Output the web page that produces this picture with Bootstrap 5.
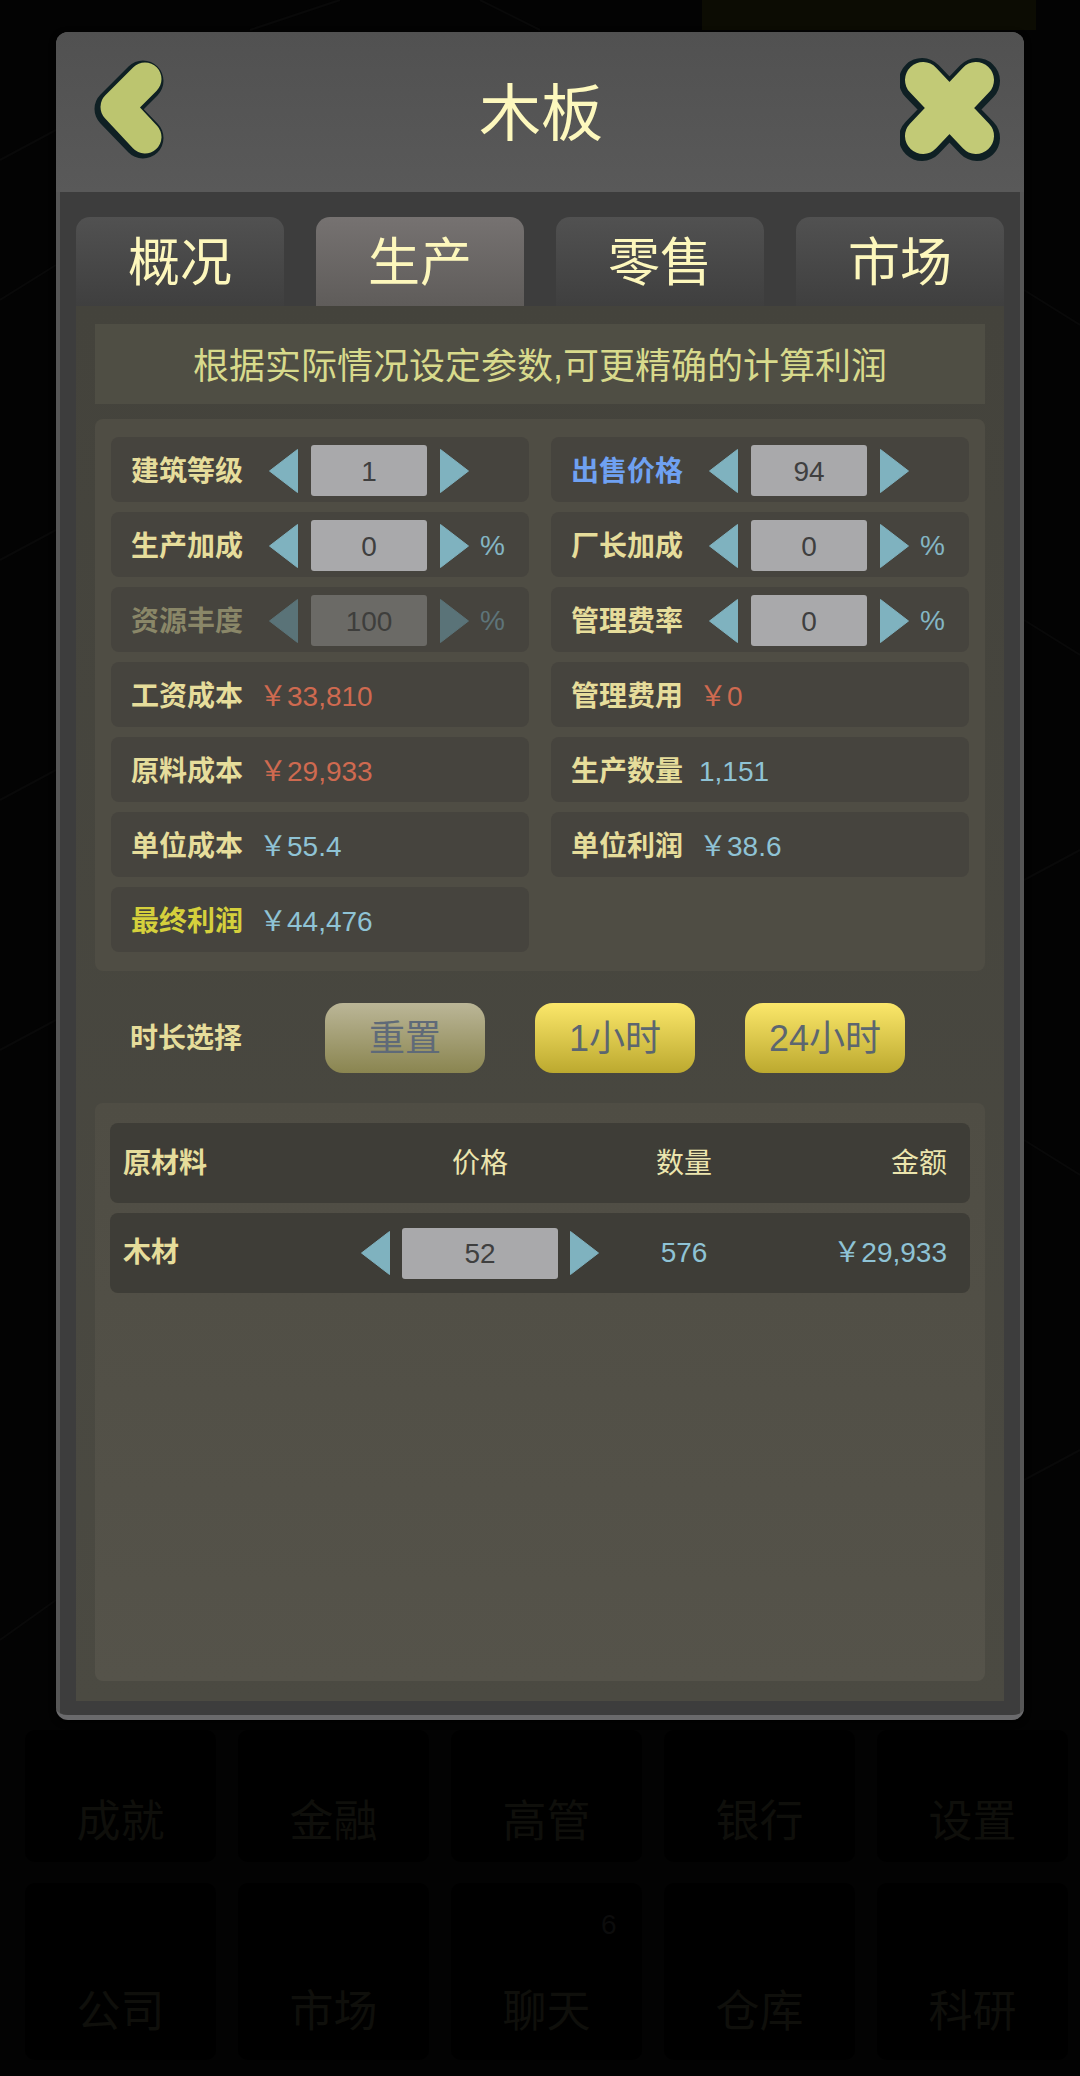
<!DOCTYPE html>
<html lang="zh">
<head>
    <meta charset="utf-8">
    <title>木板</title>
    <link href="https://cdn.jsdelivr.net/npm/bootstrap@5.3.0/dist/css/bootstrap.min.css" rel="stylesheet">
    <style>
        html, body { height: 2076px; overflow: hidden; }
        body { background: #030303; font-family: "Liberation Sans", "Noto Sans CJK SC", sans-serif; position: relative; }
        .backdrop { position: absolute; left: 0; top: 0; width: 1080px; height: 2076px; }
        .game-page { position: relative; padding-top: 32px; }

        .dialog { width: 968px; height: 1688px; margin-left: 56px; background: #565656; border-radius: 12px; border-bottom: 5px solid #6a6a6c; box-shadow: 0 2px 6px #000; overflow: hidden; }
        .dialog-head { height: 160px; padding: 0 24px 0 38px; background: linear-gradient(#515151, #595959); color: #fdf8bd; }
        .head-icon { width: 88px; margin-bottom: 6px; }
        .head-icon.end { width: 100px; }
        .dialog-title { font-size: 62px; line-height: 1; padding-top: 6px; }
        .dialog-body { height: 1523px; margin: 0 4px; padding: 25px 16px 14px; background: #3d3d3d; }

        .tab-list { gap: 32px; height: 89px; }
        .tab-list .nav-link { width: 208px; height: 89px; padding: 2px 0 0; display: flex; align-items: center; justify-content: center; border-radius: 14px 14px 0 0; background: linear-gradient(#515151, #3f3f3f); color: #fdf7bc; font-size: 52px; }
        .tab-list .nav-link.active { background: linear-gradient(#767271, #5f5c5a); }

        .tab-panel { height: 1395px; padding: 18px 19px 20px; background: linear-gradient(#44433c, #4b4a42); }
        .notice-bar { height: 80px; padding-top: 5px; background: #4f4e44; color: #d8da8c; font-size: 36px; }
        .stat-panel { margin-top: 15px; padding: 18px 16px 19px 16px; background: #4f4d44; border-radius: 8px; display: grid; grid-template-columns: 418px 418px; column-gap: 22px; row-gap: 10px; }
        .stat-row { height: 65px; padding-left: 20px; background: #46443e; border-radius: 8px; font-size: 28px; }
        .stat-name { width: 112px; padding-top: 4px; font-weight: 700; color: #e6dd9b; white-space: nowrap; line-height: 1; }
        .stat-name.sell { color: #6fa1f2; }
        .stat-name.profit { color: #d5d03c; }
        .stat-value { margin-left: 16px; padding-top: 4px; color: #8fc3d5; white-space: nowrap; }
        .stat-value.cost { color: #cf6a50; }
        .unit { margin-left: 10px; padding-top: 3px; color: #84b6c4; }

        .stepper { margin: 2px 0 0 25px; gap: 12px; }
        .step-btn { width: 31px; height: 46px; flex: none; fill: #7fb2bf; stroke: #7fb2bf; stroke-width: 1; stroke-linejoin: round; }
        .step-value { width: 116px; height: 51px; padding-top: 2px; background: #a9a9ab; border-radius: 3px; color: #3f3f3f; }
        .stat-row.off .stat-name { color: #8a8768; }
        .stat-row.off .step-btn { fill: #5a7378; stroke: #5a7378; }
        .stat-row.off .step-value { background: #6b6a66; color: #3e3e3c; }
        .stat-row.off .unit { color: #5e7479; }

        .time-row { height: 132px; padding: 32px 0 30px 35px; }
        .time-name { width: 195px; padding-top: 2px; font-size: 28px; font-weight: 700; color: #e6dd9b; line-height: 1; }
        .time-btns { gap: 50px; }
        .time-btn { width: 160px; height: 70px; padding: 2px 0 0; border: 0; border-radius: 18px; background: linear-gradient(#fbe76a, #bca92f); color: #5c6670; font-size: 36px; line-height: 1; }
        .time-btn.reset { background: linear-gradient(#bbb697, #8a8550); color: #5f6a78; }

        .material-panel { height: 578px; padding: 20px 15px; background: linear-gradient(#4f4d44, #55534a); border-radius: 8px; }
        .material-row { height: 80px; margin-bottom: 10px; padding: 0 23px 0 13px; background: #3e3d37; border-radius: 8px; display: grid; grid-template-columns: 237px 240px 168px 1fr; align-items: center; font-size: 28px; color: #ece5ae; }
        .material-row:first-child { padding-top: 2px; }
        .material-row b { color: #e6dd9b; }
        .material-row .stepper { margin: 0; gap: 11px; }
        .material-row .step-value { width: 157px; }
        .material-row .num { color: #8fc3d5; }

        .dim-menu { padding: 10px 25px 0; display: grid; grid-template-columns: repeat(5, 191px); column-gap: 22px; }
        .dim-item { position: relative; display: flex; align-items: flex-end; justify-content: center; background: #000; border-radius: 10px; color: #0f0f0b; font-size: 44px; line-height: 1; }
        .dim-item.top { height: 132px; padding-bottom: 18px; margin-bottom: 21px; }
        .dim-item.low { height: 177px; padding-bottom: 26px; }
        .dim-count { position: absolute; left: 150px; top: 28px; font-size: 28px; color: #0c0c0c; }
    </style>
</head>
<body>
<svg class="backdrop" viewBox="0 0 1080 2076">
    <rect x="702" y="0" width="334" height="30" fill="#0c0c03"/>
    <g stroke="#090909" stroke-width="2" fill="none">
        <path d="M0 160 L56 130 M0 300 L56 265 M0 560 L56 530 M0 800 L56 770 M0 1050 L56 1020 M0 1640 L56 1600"/>
        <path d="M1024 290 L1080 325 M1024 620 L1080 655 M1024 880 L1080 850 M1024 1140 L1080 1175 M1024 1480 L1080 1450"/>
        <path d="M250 30 L340 0 M480 0 L540 30"/>
    </g>
</svg>

<svg width="0" height="0" class="position-absolute">
    <symbol id="tri-left" viewBox="0 0 31 46"><polygon points="1.5,23 29.5,1.5 29.5,44.5"/></symbol>
    <symbol id="tri-right" viewBox="0 0 31 46"><polygon points="1.5,1.5 29.5,23 1.5,44.5"/></symbol>
</svg>

<div class="game-page">
    <div class="dialog">
        <div class="dialog-head d-flex align-items-center">
            <div class="head-icon">
                <svg class="d-block" width="72" height="102" viewBox="94 58 72 102">
                    <polyline points="144,79 116,107 144,136" transform="translate(-1 2)" fill="none" stroke="#0f2024" stroke-width="41" stroke-linecap="round" stroke-linejoin="round"/>
                    <polyline points="145,79 117,107 145,137" fill="none" stroke="#bcc56f" stroke-width="33" stroke-linecap="round" stroke-linejoin="round"/>
                </svg>
            </div>
            <div class="dialog-title flex-grow-1 text-center">木板</div>
            <div class="head-icon end">
                <svg class="d-block" width="100" height="104" viewBox="899 57 100 104">
                    <path d="M921 80 L976 137 M976 80 L921 137" transform="translate(0 1)" fill="none" stroke="#0f2024" stroke-width="46" stroke-linecap="round"/>
                    <path d="M922 80 L975 136 M975 80 L922 136" fill="none" stroke="#c2ca76" stroke-width="36" stroke-linecap="round"/>
                </svg>
            </div>
        </div>

        <div class="dialog-body">
            <ul class="nav tab-list">
                <li class="nav-item"><a class="nav-link" href="#">概况</a></li>
                <li class="nav-item"><a class="nav-link active" href="#">生产</a></li>
                <li class="nav-item"><a class="nav-link" href="#">零售</a></li>
                <li class="nav-item"><a class="nav-link" href="#">市场</a></li>
            </ul>

            <div class="tab-panel">
                <div class="notice-bar d-flex align-items-center justify-content-center">根据实际情况设定参数,可更精确的计算利润</div>

                <div class="stat-panel">
                    <div class="stat-row d-flex align-items-center">
                        <div class="stat-name">建筑等级</div>
                        <div class="stepper d-flex align-items-center">
                            <svg class="step-btn"><use href="#tri-left"/></svg>
                            <div class="step-value d-flex align-items-center justify-content-center">1</div>
                            <svg class="step-btn"><use href="#tri-right"/></svg>
                        </div>
                    </div>
                    <div class="stat-row d-flex align-items-center">
                        <div class="stat-name sell">出售价格</div>
                        <div class="stepper d-flex align-items-center">
                            <svg class="step-btn"><use href="#tri-left"/></svg>
                            <div class="step-value d-flex align-items-center justify-content-center">94</div>
                            <svg class="step-btn"><use href="#tri-right"/></svg>
                        </div>
                    </div>
                    <div class="stat-row d-flex align-items-center">
                        <div class="stat-name">生产加成</div>
                        <div class="stepper d-flex align-items-center">
                            <svg class="step-btn"><use href="#tri-left"/></svg>
                            <div class="step-value d-flex align-items-center justify-content-center">0</div>
                            <svg class="step-btn"><use href="#tri-right"/></svg>
                        </div>
                        <div class="unit">%</div>
                    </div>
                    <div class="stat-row d-flex align-items-center">
                        <div class="stat-name">厂长加成</div>
                        <div class="stepper d-flex align-items-center">
                            <svg class="step-btn"><use href="#tri-left"/></svg>
                            <div class="step-value d-flex align-items-center justify-content-center">0</div>
                            <svg class="step-btn"><use href="#tri-right"/></svg>
                        </div>
                        <div class="unit">%</div>
                    </div>
                    <div class="stat-row off d-flex align-items-center">
                        <div class="stat-name">资源丰度</div>
                        <div class="stepper d-flex align-items-center">
                            <svg class="step-btn"><use href="#tri-left"/></svg>
                            <div class="step-value d-flex align-items-center justify-content-center">100</div>
                            <svg class="step-btn"><use href="#tri-right"/></svg>
                        </div>
                        <div class="unit">%</div>
                    </div>
                    <div class="stat-row d-flex align-items-center">
                        <div class="stat-name">管理费率</div>
                        <div class="stepper d-flex align-items-center">
                            <svg class="step-btn"><use href="#tri-left"/></svg>
                            <div class="step-value d-flex align-items-center justify-content-center">0</div>
                            <svg class="step-btn"><use href="#tri-right"/></svg>
                        </div>
                        <div class="unit">%</div>
                    </div>
                    <div class="stat-row d-flex align-items-center"><div class="stat-name">工资成本</div><div class="stat-value cost">￥33,810</div></div>
                    <div class="stat-row d-flex align-items-center"><div class="stat-name">管理费用</div><div class="stat-value cost">￥0</div></div>
                    <div class="stat-row d-flex align-items-center"><div class="stat-name">原料成本</div><div class="stat-value cost">￥29,933</div></div>
                    <div class="stat-row d-flex align-items-center"><div class="stat-name">生产数量</div><div class="stat-value">1,151</div></div>
                    <div class="stat-row d-flex align-items-center"><div class="stat-name">单位成本</div><div class="stat-value">￥55.4</div></div>
                    <div class="stat-row d-flex align-items-center"><div class="stat-name">单位利润</div><div class="stat-value">￥38.6</div></div>
                    <div class="stat-row d-flex align-items-center"><div class="stat-name profit">最终利润</div><div class="stat-value">￥44,476</div></div>
                </div>

                <div class="time-row d-flex align-items-center">
                    <div class="time-name">时长选择</div>
                    <div class="time-btns d-flex">
                        <button class="btn time-btn reset">重置</button>
                        <button class="btn time-btn">1小时</button>
                        <button class="btn time-btn">24小时</button>
                    </div>
                </div>

                <div class="material-panel">
                    <div class="material-row">
                        <b>原材料</b>
                        <div class="text-center">价格</div>
                        <div class="text-center">数量</div>
                        <div class="text-end">金额</div>
                    </div>
                    <div class="material-row">
                        <b>木材</b>
                        <div class="stepper d-flex align-items-center">
                            <svg class="step-btn"><use href="#tri-left"/></svg>
                            <div class="step-value d-flex align-items-center justify-content-center">52</div>
                            <svg class="step-btn"><use href="#tri-right"/></svg>
                        </div>
                        <div class="num text-center">576</div>
                        <div class="num text-end">￥29,933</div>
                    </div>
                </div>
            </div>
        </div>
    </div>

    <div class="dim-menu">
        <div class="dim-item top">成就</div>
        <div class="dim-item top">金融</div>
        <div class="dim-item top">高管</div>
        <div class="dim-item top">银行</div>
        <div class="dim-item top">设置</div>
        <div class="dim-item low">公司</div>
        <div class="dim-item low">市场</div>
        <div class="dim-item low">聊天<span class="dim-count">6</span></div>
        <div class="dim-item low">仓库</div>
        <div class="dim-item low">科研</div>
    </div>
</div>

<script src="https://cdn.jsdelivr.net/npm/bootstrap@5.3.0/dist/js/bootstrap.bundle.min.js"></script>
</body>
</html>
